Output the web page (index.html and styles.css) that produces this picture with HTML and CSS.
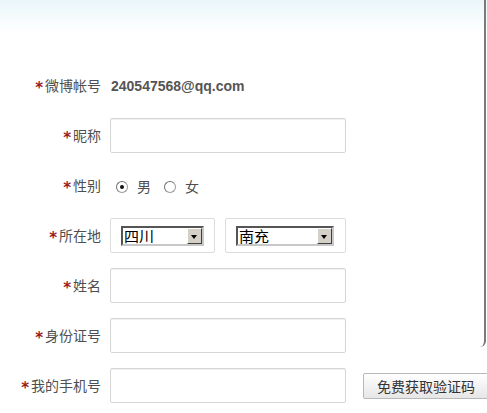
FILE: index.html
```html
<!DOCTYPE html>
<html lang="zh-CN">
<head>
<meta charset="utf-8">
<title>注册</title>
<link rel="stylesheet" href="styles.css">
</head>
<body>
<div class="page">
  <div class="frame-edge"></div>
  <form class="form">
    <div class="row">
      <label class="label"><span class="req">*</span>微博帐号</label>
      <div class="field"><span class="account">240547568@qq.com</span></div>
    </div>
    <div class="row">
      <label class="label"><span class="req">*</span>昵称</label>
      <div class="field"><span class="input"></span></div>
    </div>
    <div class="row">
      <label class="label"><span class="req">*</span>性别</label>
      <div class="field gender">
        <span class="radio checked"></span><span class="opt">男</span>
        <span class="radio"></span><span class="opt">女</span>
      </div>
    </div>
    <div class="row">
      <label class="label"><span class="req">*</span>所在地</label>
      <div class="field loc">
        <span class="selbox prov"><span class="sel"><span class="sel-text">四川</span><span class="sel-btn"></span></span></span>
        <span class="selbox city"><span class="sel"><span class="sel-text">南充</span><span class="sel-btn"></span></span></span>
      </div>
    </div>
    <div class="row">
      <label class="label"><span class="req">*</span>姓名</label>
      <div class="field"><span class="input"></span></div>
    </div>
    <div class="row">
      <label class="label"><span class="req">*</span>身份证号</label>
      <div class="field"><span class="input"></span></div>
    </div>
    <div class="row">
      <label class="label"><span class="req">*</span>我的手机号</label>
      <div class="field"><span class="input"></span><span class="btn">免费获取验证码</span></div>
    </div>
  </form>
</div>
</body>
</html>
```
FILE: styles.css
```css
html, body {
  margin: 0;
  padding: 0;
  background: #fff;
  overflow: hidden;
}
body {
  width: 487px;
  height: 413px;
  font-family: "Noto Sans CJK SC", "Liberation Sans", sans-serif;
  font-size: 14px;
  color: #4f4f4f;
}
.page {
  position: relative;
  height: 413px;
  background: linear-gradient(to bottom, #eaf6fa 0px, #f3fafc 14px, #ffffff 34px);
}
.frame-edge {
  position: absolute;
  top: 0;
  right: 1px;
  width: 6px;
  height: 347px;
  border-right: 2px solid #7a7a7a;
  border-bottom-right-radius: 6px;
  box-sizing: border-box;
}
.form {
  display: flex;
  flex-direction: column;
  gap: 15px;
  padding-top: 68px;
  margin: 0;
}
.row {
  display: flex;
  align-items: center;
  height: 35px;
}
.label {
  width: 101px;
  flex: none;
  text-align: right;
  color: #4f4f4f;
  font-size: 14px;
  line-height: 20px;
  white-space: nowrap;
}
.req {
  color: #9b1b1b;
  font-family: "DejaVu Sans", sans-serif;
  font-size: 15px;
  font-weight: bold;
  margin-right: 2px;
  position: relative;
  top: 2px;
}
.field {
  margin-left: 9px;
  display: flex;
  align-items: center;
  height: 35px;
}
.account {
  font-family: "Liberation Sans", sans-serif;
  font-weight: bold;
  font-size: 14px;
  color: #555;
  margin-left: 1px;
}
.input {
  display: block;
  width: 236px;
  height: 35px;
  box-sizing: border-box;
  border: 1px solid #d6d6d6;
  border-radius: 2px;
  background: #fff;
  box-shadow: inset 0 1px 1px #f0f0f0;
}
.gender {
  padding-left: 6px;
}
.radio {
  width: 12px;
  height: 12px;
  box-sizing: border-box;
  border-radius: 50%;
  border: 1px solid #9a9a9a;
  border-top-color: #707070;
  border-left-color: #707070;
  background: #fff;
  position: relative;
  margin-top: 2px;
}
.radio.checked::after {
  content: "";
  position: absolute;
  left: 3px;
  top: 3px;
  width: 4px;
  height: 4px;
  border-radius: 50%;
  background: #111;
}
.opt {
  margin-left: 9px;
  margin-right: 13px;
  color: #4f4f4f;
}
.loc {
  gap: 10px;
}
.selbox {
  display: flex;
  align-items: center;
  height: 35px;
  box-sizing: border-box;
  border: 1px solid #dcdcdc;
  border-radius: 2px;
  background: #fff;
  padding-left: 10px;
}
.prov { width: 105px; }
.city { width: 121px; }
.sel {
  display: flex;
  align-items: stretch;
  height: 20px;
  box-sizing: border-box;
  border: 2px solid #555;
  border-right-color: #c8c8c8;
  border-bottom-color: #c8c8c8;
  background: #fff;
}
.prov .sel { width: 83px; }
.city .sel { width: 98px; }
.sel-text {
  flex: 1;
  font-size: 15px;
  line-height: 16px;
  color: #000;
  padding-left: 1px;
}
.sel-btn {
  width: 15px;
  box-sizing: border-box;
  background: #d4d0c8;
  border: 1px solid #fff;
  border-right-color: #404040;
  border-bottom-color: #404040;
  position: relative;
}
.sel-btn::after {
  content: "";
  position: absolute;
  left: 3px;
  top: 6px;
  border-left: 3.5px solid transparent;
  border-right: 3.5px solid transparent;
  border-top: 4px solid #000;
}
.btn {
  margin-left: 17px;
  flex: none;
  width: 126px;
  height: 26px;
  box-sizing: border-box;
  border: 1px solid #b8b8b8;
  border-radius: 2px;
  background: linear-gradient(to bottom, #ffffff, #e6e6e6);
  color: #333;
  font-size: 14px;
  line-height: 24px;
  padding-left: 13px;
  white-space: nowrap;
}
```
